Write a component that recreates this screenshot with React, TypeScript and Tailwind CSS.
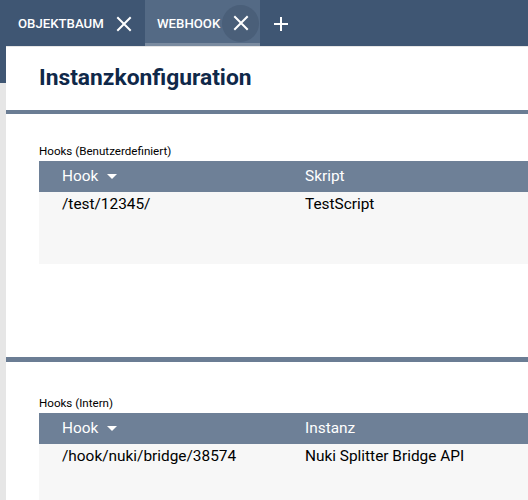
import React from "react";

const XIcon = () => (
  <svg width="16" height="16" viewBox="0 0 16 16" fill="none" stroke="white" strokeWidth="2" strokeLinecap="square">
    <path d="M2 2 L14 14 M14 2 L2 14" />
  </svg>
);

const PlusIcon = () => (
  <svg width="16" height="16" viewBox="0 0 16 16" fill="none" stroke="white" strokeWidth="2">
    <path d="M8 1 V15 M1 8 H15" />
  </svg>
);

const SortDown = () => (
  <svg width="10" height="6" viewBox="0 0 10 6" className="ml-[9px] mt-[2px]">
    <path d="M0 0 H10 L5 5 Z" fill="white" />
  </svg>
);

function Table({ label, col2, c1, c2 }: { label: string; col2: string; c1: string; c2: string }) {
  return (
    <div>
      <div className="text-[11.6px] leading-[14px] text-black mb-[3px]">{label}</div>
      <div className="w-[600px]">
        <div className="h-[31px] bg-[#6e8097] flex items-center text-white text-[15.4px]">
          <div className="w-[266px] shrink-0 pl-[23px] flex items-center">
            <span>Hook</span>
            <SortDown />
          </div>
          <div>{col2}</div>
        </div>
        <div className="h-[72px] bg-[#f7f7f7] flex text-[15.4px] text-black pt-[1px]">
          <div className="w-[266px] shrink-0 pl-[23px]">{c1}</div>
          <div>{c2}</div>
        </div>
      </div>
    </div>
  );
}

export default function App() {
  return (
    <div className="w-[528px] h-[500px] overflow-hidden bg-[#e6e6e6] flex flex-col" style={{ fontFamily: "Roboto, 'Noto Sans', sans-serif" }}>
      <div className="h-[46px] bg-[#3f5673] flex items-stretch shrink-0">
        <div className="flex items-center pl-[18px] pt-[2px] w-[145px] shrink-0 text-white text-[13.2px] font-medium">
          <span>OBJEKTBAUM</span>
          <span className="ml-[12px] flex items-center"><XIcon /></span>
        </div>
        <div className="relative flex items-center justify-between pl-[12px] pr-[1px] bg-[#546a85] text-white text-[13.2px] font-medium w-[115px] shrink-0">
          <span className="pt-[2px]">WEBHOOK</span>
          <span className="w-[37px] h-[37px] rounded-full bg-[#4a5f79] flex items-center justify-center"><XIcon /></span>
          <div className="absolute left-0 right-0 bottom-0 h-[3px] bg-[#7a8ba0]" />
        </div>
        <div className="flex items-center pl-[13px] pt-[2px]"><PlusIcon /></div>
      </div>
      <div className="flex flex-1 bg-[#e6e6e6] min-w-0">
        <div className="w-[6px] shrink-0 flex flex-col">
          <div className="h-[37px] bg-[#3f5673]" />
        </div>
        <div className="flex-1 min-w-0 bg-white mt-[1px] overflow-hidden">
          <div className="h-[63px] pl-[33px] pt-[15px]">
            <h1 className="text-[22.8px] leading-[32px] font-bold text-[#0f2849]">Instanzkonfiguration</h1>
          </div>
          <div className="h-[4px] bg-[#6b7d94]" />
          <div className="pl-[33px] pt-[30px] h-[243px]">
            <Table label="Hooks (Benutzerdefiniert)" col2="Skript" c1="/test/12345/" c2="TestScript" />
          </div>
          <div className="h-[5px] bg-[#6b7d94]" />
          <div className="pl-[33px] pt-[34px]">
            <Table label="Hooks (Intern)" col2="Instanz" c1="/hook/nuki/bridge/38574" c2="Nuki Splitter Bridge API" />
          </div>
        </div>
      </div>
    </div>
  );
}
